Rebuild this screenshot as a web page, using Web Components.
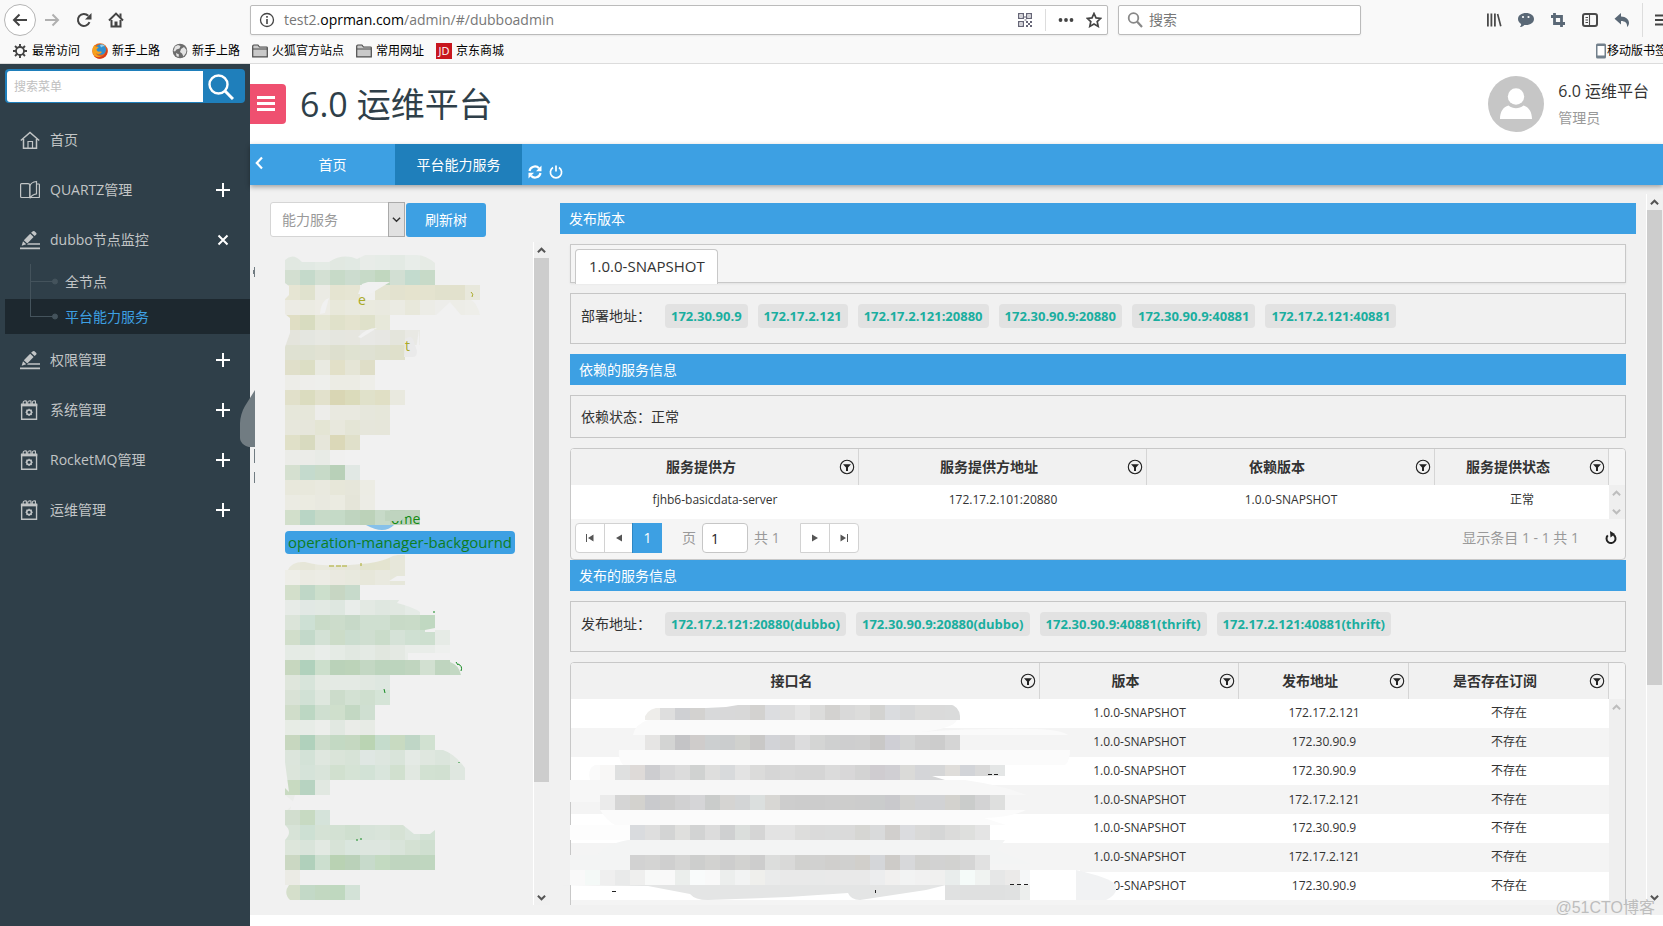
<!DOCTYPE html>
<html lang="zh-CN">
<head>
<meta charset="utf-8">
<title>6.0 运维平台</title>
<style>
html, body { margin: 0; height: 100%; overflow: hidden; }
body { font: 14px/20px "Open Sans", "Noto Sans CJK SC", sans-serif; color: #333; background: #fff; }
</style>
</head>
<body>
<ops-app></ops-app>

<script>
const ICONS = {
  back: ['0 0 16 16', '<path d="M15 8H2M7.500 2.500L2 8l5.500 5.500" fill="none" stroke="currentColor" stroke-width="2"/>'],
  forward: ['0 0 16 16', '<path d="M1 8h13M8.500 2.500L14 8l-5.500 5.500" fill="none" stroke="currentColor" stroke-width="2"/>'],
  reload: ['0 0 16 16', '<path d="M13.500 10.200A6 6 0 1 1 12.300 3.800" fill="none" stroke="currentColor" stroke-width="2"/><path d="M15.500 1v6.500H9z"/>'],
  home: ['0 0 16 16', '<path d="M1 8.500L8 1.600l7 6.900" fill="none" stroke="currentColor" stroke-width="2"/><path d="M3.500 8v6.500h9V8" fill="none" stroke="currentColor" stroke-width="2"/><path d="M6.500 9.500h3V15h-3z"/><path d="M11.500 1.500h2V6l-2-2z"/>'],
  info: ['0 0 16 16', '<circle cx="8" cy="8" r="6.500" fill="none" stroke="currentColor" stroke-width="1.300"/><path d="M7.200 7h1.600v5H7.200zM7.200 4h1.600v1.700H7.200z"/>'],
  qr: ['0 0 14 14', '<path d="M0 0h6v6H0zM1.300 1.300v3.400h3.400V1.300zM8 0h6v6H8zM9.300 1.300v3.400h3.400V1.300zM0 8h6v6H0zM1.300 9.300v3.400h3.400V9.300zM2.400 2.400h1.200v1.200H2.400zM10.400 2.400h1.200v1.200h-1.200zM2.400 10.400h1.200v1.200H2.400zM8 8h2v2H8zM12 8h2v2h-2zM10 10h2v2h-2zM8 12h2v2H8zM12 12h2v2h-2zM6.500 3h1v2h-1zM6.500 6.500h2v1h-2z" fill-rule="evenodd"/>'],
  dots: ['0 0 16 16', '<circle cx="2.500" cy="8" r="1.900"/><circle cx="8" cy="8" r="1.900"/><circle cx="13.500" cy="8" r="1.900"/>'],
  star: ['0 0 16 16', '<path d="M8 1.500l2 4.400 4.700.500-3.500 3.200 1 4.800L8 12l-4.200 2.400 1-4.800L1.300 6.400 6 5.900z" fill="none" stroke="currentColor" stroke-width="1.700"/>'],
  lens: ['0 0 16 16', '<circle cx="6.500" cy="6" r="4.800" fill="none" stroke="currentColor" stroke-width="1.800"/><path d="M10 9.500l5 5.500" stroke="currentColor" stroke-width="2.200"/>'],
  library: ['0 0 16 16', '<path d="M1 1.500h1.800v13H1zM4.500 1.500h1.800v13H4.500zM8 1.500h1.800v13H8zM10.800 2.200l1.600-.500 3.200 12.300-1.600.500z"/>'],
  chat: ['0 0 16 16', '<path d="M8 1c4.500 0 8 2.500 8 6s-3.500 6-8 6c-.600 0-1.200 0-1.700-.100C5 14.400 3.500 15 2 15c.800-1 1.200-2 1.200-3C1.200 10.900 0 9 0 7c0-3.500 3.500-6 8-6z"/><circle cx="5" cy="5" r="1.100" fill="#fff"/><circle cx="10.500" cy="5" r="1.100" fill="#fff"/>'],
  crop: ['0 0 16 16', '<path d="M4.500 1v10.500h10.500M1 4.500h10.500V15" fill="none" stroke="currentColor" stroke-width="2.800"/>'],
  panel: ['0 0 16 16', '<rect x="1" y="2" width="14" height="12" rx="2" fill="none" stroke="currentColor" stroke-width="2"/><path d="M7.500 2v12M3.500 5.500h2.500M3.500 8h2.500M3.500 10.500h2.500" stroke="currentColor" stroke-width="1.100"/>'],
  undo: ['0 0 16 16', '<path d="M7 1v3.500c5 0 8 3 8 6.500 0 1.500-.700 3-2 4 .600-4-2-6-6-6v3.500L.500 6.800z"/>'],
  menu: ['0 0 16 16', '<path d="M0 2.500h16v2H0zM0 7h16v2H0zM0 11.500h16v2H0z"/>'],
  cog: ['0 0 16 16', '<circle cx="8" cy="8" r="4" fill="none" stroke="currentColor" stroke-width="1.800"/><path d="M8 1v3M8 12v3M1 8h3M12 8h3M3 3l2.200 2.200M10.800 10.800L13 13M13 3l-2.200 2.200M5.200 10.800L3 13" stroke="currentColor" stroke-width="1.900"/>'],
  firefox: ['0 0 16 16', '<circle cx="8" cy="8" r="7.800" fill="#e66a1c"/><circle cx="8.700" cy="6.500" r="5.300" fill="#2f8fd0"/><path d="M8 2c2-1 4-.500 5 1-2 0-3 1-4 1.500z" fill="#8fd0ef"/><path d="M.500 7C.700 4 2 2.500 3 1.800c0 1 .300 1.500 1 2 1 0 2 0 2.600.700-.600 1-2 1.200-2 2 0 1.800 1.700 2.500 3.500 2 1-.200 1.900.200 1.600.800-1 2-4.200 2.200-6 .700C4.700 12.500 7 13.500 9 13.200 5 16 .200 12.500.500 7z" fill="#f6a11d"/><path d="M14.800 4c1.600 4 .500 8.500-3 10.600-4 2.200-8.200.600-9.800-1.600 4 2 8 1.500 10.200-1.200C14 9.400 14.600 7 14.800 4z" fill="#d93a1c"/>'],
  globe: ['0 0 16 16', '<circle cx="8" cy="8" r="7.300" fill="#6d6d6d"/><path d="M3 3.500l3-1.500 2.500 1-1 2.500-3 1-1.500 2L1.500 8zM9 6l3-2 2.500 3-.500 3-2.500 3.500-1.500-3L8 9zM4 10l3 1.500-.500 2.500L4.500 13z" fill="#e4e4e4"/>'],
  folder: ['0 0 16 16', '<path d="M.700 13.800V3.200c0-.700.400-1.200 1.200-1.200h4L7.500 4h7c.500 0 .800.300.800.800v9z" fill="#c9c9c9" stroke="#4c4c4c" stroke-width="1.200"/><path d="M1 6h14" stroke="#4c4c4c"/>'],
  phone: ['0 0 10 16', '<rect width="10" height="15" y="0.500" rx="1.500" fill="#72808c"/><path d="M1.500 3h7v9.500h-7z" fill="#fff"/>'],
  search: ['0 0 26 26', '<circle cx="10.500" cy="10.500" r="9" fill="none" stroke="currentColor" stroke-width="2.400"/><path d="M17 17l8 8" stroke="currentColor" stroke-width="3"/>'],
  house: ['0 0 20 18', '<path d="M.800 9.500L10 1.500l9.200 8M3.500 8v9.200h13V8" fill="none" stroke="currentColor" stroke-width="1.500"/><path d="M8 17v-6.500h4.500V17" fill="none" stroke="currentColor" stroke-width="1.200"/>'],
  book: ['0 0 20 18', '<path d="M9.500 16.500H1.500c-.500 0-.900-.300-.900-.900V3.500c0-.500.400-.900.900-.900H8c1 0 1.700.700 1.700 1.600V17M10 17.300V5c.500-2.500 2.500-4 6.500-4.500v12.300c-3 .600-5.500 2-6.500 4.500zM16.500 3h2.300c.300 0 .600.300.600.600V15.900c0 .300-.300.600-.600.600h-8" fill="none" stroke="currentColor" stroke-width="1.200"/>'],
  pen: ['0 0 20 20', '<path d="M12.500 1.500c.600-.700 1.500-.700 2.200-.100l1.400 1.300c.600.600.600 1.500 0 2.100L14.600 6l-3.500-3.300zM10.200 3.700l3.400 3.300-6.300 6.600-3.500-3.300zM3 11.300l3.300 3-4.600 1.500zM8.500 13.200H20v1.600H7zM0 17.500h20v1.700H0z"/>'],
  calendar: ['0 0 20 22', '<path d="M.800 4.500h16.400v16.700H.800z" fill="none" stroke="currentColor" stroke-width="1.500"/><path d="M0 4.500h18v2.500H0z"/><path d="M2.500 6V2.500C2.500 1 5 .800 6 1.200V5M7.500 6V2.500C7.500 1 10 .800 11 1.200V5M12.500 6V2.500c0-1.500 2.500-1.700 3.500-1.300V5" fill="none" stroke="currentColor" stroke-width="1.200"/><circle cx="9" cy="13.500" r="2.600" fill="none" stroke="currentColor" stroke-width="1.700"/><path d="M9 9.500v1.700M9 15.800v1.700M5 13.500h1.700M11.300 13.500H13M6.200 10.700l1.200 1.200M10.600 15.100l1.200 1.200M11.800 10.700l-1.200 1.200M7.400 15.100l-1.200 1.200" stroke="currentColor" stroke-width="1.300"/>'],
  plus: ['0 0 14 14', '<path d="M6 0h2v6h6v2H8v6H6V8H0V6h6z"/>'],
  cross: ['0 0 14 14', '<path d="M2.500 2.500l9 9M11.500 2.500l-9 9" stroke="currentColor" stroke-width="2"/>'],
  bars: ['0 0 18 16', '<path d="M0 0h18v3H0zM0 6h18v3H0zM0 12h18v3H0z"/>'],
  person: ['0 0 56 56', '<circle cx="28" cy="28" r="28" fill="#c6c6c6"/><circle cx="28" cy="20.500" r="8.200" fill="#fff"/><path d="M12 43c0-7 3-12 8.500-13.500 4.500 3.500 10.500 3.500 15 0C41 31 44 36 44 43z" fill="#fff"/>'],
  left: ['0 0 8 14', '<path d="M7 1.500L1.800 7 7 12.500" fill="none" stroke="currentColor" stroke-width="2.200"/>'],
  sync: ['0 0 14 14', '<path d="M1.500 6A5.500 5.500 0 0 1 11 3.300M12.500 8A5.500 5.500 0 0 1 3 10.700" fill="none" stroke="currentColor" stroke-width="2.200"/><path d="M13.500.500v5.700H8zM.500 13.500V7.800H6z"/>'],
  power: ['0 0 14 14', '<path d="M4 2.500a5.600 5.600 0 1 0 6 0M7 .500v6" fill="none" stroke="currentColor" stroke-width="1.700"/>'],
  down: ['0 0 10 10', '<path d="M1 3l4 4 4-4" fill="none" stroke="currentColor" stroke-width="1.600"/>'],
  up: ['0 0 10 10', '<path d="M1 7l4-4 4 4" fill="none" stroke="currentColor" stroke-width="2.200"/>'],
  dn: ['0 0 10 10', '<path d="M1 3l4 4 4-4" fill="none" stroke="currentColor" stroke-width="2.200"/>'],
  filter: ['0 0 16 16', '<circle cx="8" cy="8" r="6.700" fill="none" stroke="currentColor" stroke-width="1.100"/><path d="M4 5.300h8L9 8.500V12H7V8.500z"/>'],
  first: ['0 0 8 10', '<path d="M0 1h1v8H0zM7.500 1.500v7L2 5z"/>'],
  prev: ['0 0 8 10', '<path d="M7 1.500v7L1 5z"/>'],
  next: ['0 0 8 10', '<path d="M1 1.500v7L7 5z"/>'],
  last: ['0 0 8 10', '<path d="M7 1h1v8H7zM.500 1.500v7L6 5z"/>'],
  refresh: ['0 0 12 14', '<path d="M8.500 3.800A4.500 4.500 0 1 1 2.800 4.400" fill="none" stroke="currentColor" stroke-width="2"/><path d="M5 0l5 3-4.500 3.500z"/>']
};

/* Shared base: renders the markup from view() into an open shadow root. */
class View extends HTMLElement {
  connectedCallback() {
    if (this.shadowRoot) return;
    const t = document.createElement('template');
    t.innerHTML = '<style>*{box-sizing:border-box}button,input,select{font:inherit;margin:0}:host{display:block}' + this.css() + '</style>' + this.view();
    this.attachShadow({ mode: 'open' }).append(t.content.cloneNode(true));
  }
  css() { return ''; }
  view() { return '<slot></slot>'; }
  attr(n, d = '') { return this.getAttribute(n) ?? d; }
}
const define = (name, cls) => customElements.define(name, cls);

define('ui-icon', class extends View {
  css() { return ':host{display:block;flex:none;width:16px;height:16px}svg{display:block;width:100%;height:100%;fill:currentColor}'; }
  view() { const [box, body] = ICONS[this.attr('name')]; return `<svg viewBox="${box}" aria-hidden="true">${body}</svg>`; }
});

define('scroll-bar', class extends View {
  css() { return `
    :host{display:flex;flex-direction:column;flex:none;width:17px;border-left:1px solid #fff;background:#f0f0f0;color:#555}
    :host([idle]){color:#bdbdbd;border-left:0;background:#efefef}
    .end{height:16px;width:15px;display:grid;place-items:center}
    ui-icon{width:9px;height:9px}
    .thumb{background:#cdcdcd;width:15px}`; }
  view() {
    const t = +this.attr('thumb', 0);
    return `<div class="end"><ui-icon name="up"></ui-icon></div><div class="thumb" style="flex:${t}"></div><div style="flex:${100 - t}"></div><div class="end"><ui-icon name="dn"></ui-icon></div>`;
  }
});

/* Browser frame */
define('browser-toolbar', class extends View {
  css() { return `
    :host{display:flex;align-items:center;height:40px;background:#f9f9f9;color:#444;padding-left:4px;overflow:hidden;font-size:14px}
    button{border:0;background:none;padding:0;color:inherit;width:32px;height:32px;display:grid;place-items:center;flex:none}
    .back{border:1px solid #b5b5b5;border-radius:50%;background:#fff}
    .off{color:#b0b0b0}
    .box{display:flex;align-items:center;height:30px;border:1px solid #bbb;border-radius:2px;background:#fff;box-shadow:0 1px 2px #0001;position:relative}
    .url{flex:1;margin-left:118px;padding-left:8px}
    .addr{flex:1;margin-left:9px;color:#777;white-space:nowrap;outline:0}
    b{font-weight:400;color:#000}
    .find{width:243px;margin:0 117px 0 10px;padding-left:8px;color:#888}
    .find input{flex:1;min-width:0;border:0;background:none;padding:0 0 0 6px;color:#777;outline:0}
    .find input::placeholder{color:#777}
    .sep{width:1px;height:22px;background:#ddd;margin:0 12px}
    .url ui-icon+ui-icon{margin-left:12px}
    .qr{width:14px;height:14px;color:#667;margin-right:1px}
    .url .star{margin-right:5px}
    .tools{display:flex;color:#4a4a4a}
    .blue{color:#5a6876}
    .line{width:1px;height:34px;background:#ddd;margin-left:4px}
    .more{width:8px;margin-left:12px;overflow:hidden;justify-content:start}`; }
  view() { return `
    <button class="back" aria-label="后退"><ui-icon name="back"></ui-icon></button>
    <button class="off" aria-label="前进"><ui-icon name="forward"></ui-icon></button>
    <button aria-label="刷新"><ui-icon name="reload"></ui-icon></button>
    <button aria-label="主页"><ui-icon name="home"></ui-icon></button>
    <div class="box url"><ui-icon name="info"></ui-icon>
      <div class="addr" role="textbox" contenteditable="true" spellcheck="false" aria-label="地址">test2.<b>oprman.com</b>/admin/#/dubboadmin</div>
      <ui-icon class="qr" name="qr"></ui-icon><span class="sep"></span><ui-icon name="dots"></ui-icon><ui-icon class="star" name="star"></ui-icon></div>
    <div class="box find"><ui-icon name="lens"></ui-icon><input type="search" aria-label="搜索" placeholder="搜索"></div>
    <div class="tools"><button aria-label="书库"><ui-icon name="library"></ui-icon></button><button class="blue" aria-label="消息"><ui-icon name="chat"></ui-icon></button><button class="blue" aria-label="截图"><ui-icon name="crop"></ui-icon></button><button aria-label="侧栏"><ui-icon name="panel"></ui-icon></button><button class="blue" aria-label="撤销"><ui-icon name="undo"></ui-icon></button></div>
    <span class="line"></span><button class="more" aria-label="菜单"><ui-icon name="menu"></ui-icon></button>`; }
});

define('bookmark-bar', class extends View {
  css() { return `
    :host{display:flex;align-items:center;height:24px;padding:0 0 2px 12px;background:#f9f9f9;border-bottom:1px solid #dcdcdc;font-size:12px;line-height:16px;color:#000;overflow:hidden}
    a{display:flex;align-items:center;gap:4px;margin-right:12px;color:inherit;text-decoration:none;white-space:nowrap;flex:none}
    .jd{width:16px;height:16px;background:#c8161e;color:#fff;font-size:11px;text-align:center}
    .mobile{margin:0 0 0 auto;width:67px;gap:1px;overflow:hidden}
    .mobile ui-icon{width:10px}.cog{color:#444}`; }
  view() { return `
    <a href="#"><ui-icon class="cog" name="cog"></ui-icon>最常访问</a>
    <a href="#"><ui-icon name="firefox"></ui-icon>新手上路</a>
    <a href="#"><ui-icon name="globe"></ui-icon>新手上路</a>
    <a href="#"><ui-icon name="folder"></ui-icon>火狐官方站点</a>
    <a href="#"><ui-icon name="folder"></ui-icon>常用网址</a>
    <a href="#"><span class="jd">JD</span>京东商城</a>
    <a href="#" class="mobile"><ui-icon name="phone"></ui-icon>移动版书签</a>`; }
});

/* Side menu */
define('menu-item', class extends View {
  css() { return `
    a{display:flex;align-items:center;height:50px;padding:0 20px;color:#c2c5c6;text-decoration:none}
    .i{width:20px;height:20px;margin-right:10px}
    span{flex:1}
    .s{width:14px;height:14px;color:#fff}`; }
  view() { return `<a href="#"><ui-icon class="i" name="${this.attr('icon')}"></ui-icon><span><slot></slot></span>${this.attr('sign') ? `<ui-icon class="s" name="${this.attr('sign')}"></ui-icon>` : ''}</a>`; }
});
define('menu-sub', class extends View {
  css() { return `
    a{display:flex;align-items:center;height:35px;margin-left:5px;padding-left:25px;color:#c2c5c6;text-decoration:none}
    :host([active]) a{background:#1d282f;color:#3da0e3}
    svg{width:30px;height:35px;margin-right:5px;stroke:#44535c;fill:#44535c}`; }
  view() { return `<a href="#"><svg viewBox="0 0 30 35" aria-hidden="true"><path d="M.5 0v${this.hasAttribute('active') ? 18 : 35}M0 17.500h25" fill="none"/><circle cx="25" cy="17.500" r="2.500"/></svg><slot></slot></a>`; }
});
define('side-menu', class extends View {
  css() { return `
    :host{flex:none;width:250px;background:#2f3f49;padding-top:5px;position:relative}
    form{display:flex;margin:0 5px 12px;height:34px;background:#1f7fbb;border-radius:4px;padding:2px 0 1px 2px}
    input{flex:1;min-width:0;border:0;border-radius:3px 0 0 3px;padding:0 7px;font-size:12px;background:#fff;outline:0}
    input::placeholder{color:#c0c0c0}
    button{width:42px;border:0;background:none;color:#fff;padding:0 0 0 5px}
    button ui-icon{width:26px;height:26px}
    .sub{margin:-1px 0 1px}
    svg{position:absolute;left:240px;top:196px;width:16px;height:230px;z-index:2}`; }
  view() { return `
    <form><input type="search" aria-label="搜索菜单" placeholder="搜索菜单"><button type="button" aria-label="搜索"><ui-icon name="search"></ui-icon></button></form>
    <nav>
      <menu-item icon="house">首页</menu-item>
      <menu-item icon="book" sign="plus">QUARTZ管理</menu-item>
      <menu-item icon="pen" sign="cross">dubbo节点监控</menu-item>
      <div class="sub"><menu-sub>全节点</menu-sub>
      <menu-sub active>平台能力服务</menu-sub></div>
      <menu-item icon="pen" sign="plus">权限管理</menu-item>
      <menu-item icon="calendar" sign="plus">系统管理</menu-item>
      <menu-item icon="calendar" sign="plus">RocketMQ管理</menu-item>
      <menu-item icon="calendar" sign="plus">运维管理</menu-item>
    </nav>
    <svg viewBox="0 0 16 230" aria-hidden="true" fill="#717c82"><path d="M15 130v57H9c-5-1-9-5-9-9v-15c0-5 2-12 5-17zM14 7h1v10h-1zM13 10h1v4h-1zM14 189h1v14h-1zM14 212h1v11h-1z"/></svg>`; }
});

/* Page header */
define('page-header', class extends View {
  css() { return `
    :host{display:flex;align-items:center;height:80px;background:#fff;padding-right:14px}
    button{width:36px;height:40px;border:0;border-radius:0 4px 4px 0;background:#ef5070;color:#fff;padding:0 0 0 7px}
    button ui-icon{width:18px;height:16px}
    h1{flex:1;margin:0 0 0 14px;font-size:34px;line-height:44px;font-weight:400;color:#2f3f49}
    .face{width:56px;height:56px;margin-right:14px}
    strong,small{display:block;font-weight:400}
    strong{font-size:16px;line-height:24px;margin-bottom:4px}
    small{font-size:14px;line-height:22px;color:#999}`; }
  view() { return `
    <button aria-label="收起菜单"><ui-icon name="bars"></ui-icon></button><h1>6.0 运维平台</h1>
    <ui-icon class="face" name="person"></ui-icon><div><strong>6.0 运维平台</strong><small>管理员</small></div>`; }
});
define('page-tabs', class extends View {
  css() { return `
    :host{display:flex;height:41px;background:#3da0e3;color:#fff;box-shadow:0 2px 5px #0005;position:relative;z-index:1}
    button{border:0;background:none;color:#fff;padding:0;height:41px}
    .l{width:20px;padding-left:5px;height:38px}.l ui-icon{width:8px;height:14px}
    .t{width:125px}.on{width:127px;background:#1f7fbb}
    .s{width:14px;margin-left:6px;padding-top:15px}
    .s+.s{margin-left:7px}
    .s ui-icon{width:14px;height:14px}`; }
  view() { return `<button class="l" aria-label="向左"><ui-icon name="left"></ui-icon></button><button class="t">首页</button><button class="on">平台能力服务</button><button class="s" aria-label="刷新"><ui-icon name="sync"></ui-icon></button><button class="s" aria-label="关闭"><ui-icon name="power"></ui-icon></button>`; }
});

/* Censored areas: every row is "x y colours", one 15px cell per colour. */
const cells = rows => rows.map(r => {
  const [x, y, list] = r;
  return list.split(' ').map((c, i) => `<path fill="#${c}" d="M${x + i * 15} ${y}h15v15h-15z"/>`).join('');
}).join('');

const TREE_TOP = cells([
  [0, 0, 'e1e8e1 e1e9e3 e4ebe5 e1e8e1 e1e9e3 e8ece8 e6ece7 e3eae4 e8ede9 e6ebe5'],
  [0, 15, 'd3dfd1 c5dacb d3e0d3 c7dac8 ccdccf c7dac8 c1d7bf d2dfd3 c3dbce c7dac8 eff0ef'],
  [0, 30, 'e6e5d3 e0e2ce ebebe4 e5e4d1 e6e5d3 f0f0ee e4e4d2 e3e2cf e5e3ce e4e3cf e1e1cd e2e1cd e8e8dc'],
  [0, 45, 'ecebe4 ebebe2 edece5 e8e8da e9e9de eaeadf e9e9df ebebe3 e8e8db ecece6 ededea edede7 eeeee9'],
  [0, 60, 'e0dec4 d8dcc0 e5e6d4 e0e1ca e4e3ce dfe1ca e7e8da'],
  [0, 75, 'e4e4dc e4e6e0 e7e8e2 e5e6df e6e6df e8e8e5 e7e7e3 e4e5dc e9e9e4'],
  [0, 90, 'dfe1d2 dee1d2 e1e2d3 dddfce dfe2d1 dfe1d3 dee0cf dfe0cb'],
  [0, 105, 'e0dfca dcdec5 e9eae1 e2e0c8 e5e5d6 dfdec8'],
  [0, 120, 'edede8 eeeeeb eeefec ecece4 ecece4 eeeee9'],
  [0, 135, 'e1e0ca dbdcbf e2e1cc d9d6b4 dbdbbb e0e1ca e0dfc5 e9e9df'],
  [0, 150, 'e6e7da e6e7da ededea e9e9e0 e9e9e0 e6e7dc e6e7da'],
  [0, 165, 'e7e7dc e6e6db e4e5d4 e8e8dd e4e5d6 e6e6db e6e6da'],
  [0, 180, 'e0e0c8 d8dabf e6e6da dbd8b8 e0e0ca'],
  [0, 195, 'ebece8 ebece8 e8ebe6 f0f0ef'],
  [0, 210, 'd5e0d0 c4dacd c7dac8 b8d0b8 e1e8e4'],
  [0, 225, 'e8e8dc e8e8dc e9e9df e7e7d9 e6e6da ecece4'],
  [0, 240, 'ebebe3 ebebe1 e9e9e0 ebebe1 e5e5d9 ecece5'],
  [0, 255, 'd2dfcb b9d5c5 c7dac8 c5dac7 bfd4bf bcd2b9 c7dac8 bcd2bc bfd4bf']
]) + `<g fill="#f1f1f1"><path d="M0 0h150v8Q140 0 132 0H80l-8 4Q58-2 44 7H17Q8-3 0 5zM77 29l6-2h22L85 39H73zM0 28l4 3v9l-4 4zM0 59l5 4v15L0 92zM151 60l14-13 11 13zM35 59q1-14 9-16l-4 15zM73 82q8-9 19-9l-16 10zM195 45v15q-3-12-9-15zM134 75l1 27-4-8z"/></g><path fill="#eaeaea" d="M120 84q6-4 8 0l4 12q0 6-4 6h-9z"/>
<path fill="#86c1ea" d="M3 270h106q-10 10-28 0H3z"/>
<g font-size="14"><text x="73" y="50" fill="#a9a928">e</text><text x="120" y="96" fill="#a9a928">t</text><path d="M186 37q3 2 1 5" fill="none" stroke="#a9a928"/><text x="106" y="269" fill="#128a12">ome</text><path fill="#bfd4bf" d="M100 256h35q-14 3-19 10h-16z"/></g>`;

const TREE_BOTTOM = cells([
  [0, 0, 'e8e8db e6e6d8 e9e9dd e7e7d9 e6e6da e3e4cf e4e4d0 e7e7da'],
  [0, 15, 'eeeee8 ebebe3 ecece5 eae9e0 e8e9de e7e7da e9e9df e6e7da'],
  [0, 30, 'd3dfcb bfd7c7 ccdfcc c7d6c3 c7dacb'],
  [0, 45, 'e7ebe7 e1e8e4 e2e9e3 dee7e0 e9edea e3e9e3 dfe7e0 e1e8e1 e5ebe6'],
  [0, 60, 'dbe4d9 cde0d4 c9dbc8 ccdccb c7d9c8 cfdfd0 cfdfd0 c8dac7 c9dbc8 c0d8c1'],
  [0, 75, 'd1decb c3d9ca d3e1d5 ccdcc8 cbddcf cfded0 cadcca d5e2d7 cfe0d2 cddfcf e6ebe6'],
  [0, 90, 'e5ebe5 e5ebe5 e9edea e5ebe5 e1e8e1 e4eae4 e1e7df e4e9e3 e9ede9 e9ede9 eef0ee'],
  [0, 105, 'c7d7bf b0d1bc ccdfcc bad2b9 bcd3b9 c3d7c3 bcd4bd bcd4bd c0d5bf d2e0d1 bfd5bf c3d8c3'],
  [0, 120, 'dfe6dc d7e4da e4eae3 e4eae4 e4eae4 e1e8e1 dee7e0'],
  [0, 135, 'd9e2d6 d1e1d5 dee7de ccdccb d3e1d3 cfdfcf d5e4d7'],
  [0, 150, 'd0ddca bcd7c3 cfdfd0 cfdfcc c3d8c3 cfdfd1'],
  [0, 165, 'e7ece5 e7ece7 eceeeb e1e8e1 eaece8 e7ebe5'],
  [0, 180, 'c7d7bf b0d1bc ccdccb c3d9c3 c5d8c1 bad4b3 c5dccc c8dac1 bfd6c6 d1e1d1'],
  [0, 195, 'dce5dc d3e2d7 dfe7df dae4d9 d7e3d7 dfe7e3 dde6df d9e4da e4eae5 dfe7df dbe5dc e1e8e1'],
  [0, 210, 'dce5db d5e3d9 d9e4da d1e0cf d5e3d5 d2e2d6 d9e5dc d1e0cf e1e8e1 d2e1d2 d1e0d1 dfe7e0'],
  [0, 225, 'c8dac1 b7d3c1 e1e8e1'],
  [0, 240, 'ebedea'],
  [0, 255, 'd2decf c7dac2 d5e3da'],
  [0, 270, 'd7e3d7 cde0d3 d5e2d5 d3e1d3 cfdfcf d7e3d9 d9e4da d6e2d5 dae5dc d3e2d5'],
  [0, 285, 'dde6db d9e4da e2e9e2 d7e3d7 dae6de dde6df dde6df d9e4da d4e1d3 cfdfd0'],
  [0, 300, 'cbd8c3 b0d0bb ccdfcf b9d2b3 bad1b9 c7dacb c3dac1 bfd5bf bfd5bf bfd6bf'],
  [0, 315, 'ebebe5'],
  [0, 330, 'd5dfcb c3d9c7 c2d8c1 bfd8bf d3e2d7']
]) + `<g fill="#f1f1f1"><path d="M0 0h120q-10-1-16 3-12 5-28 6Q40 13 20 7 7 6 3 15H0zM104 26l8-5h8v5zM112 48q16 4 23 9v-13h-20zM140 77h10v-4l-10 2zM123 98h42v7h-42zM165 99h15v21h-4q-2-10-11-13zM158 195q12 4 22 18v-18zM0 207l4 30-4-4zM0 240l10 8-8 7H0zM0 270q8 7 0 15zM118 270h32v5l-5 4h-16zM10 240h5v15H5zM0 330h4q-6 8 1 15H0z"/></g>
<g fill="none" stroke="#138a20"><path d="M171 107l2 3M173 109q5 2 3 7M99 134l1 4M148 57h2M174 207v1M71 285h2M75 284h2"/></g>
<path d="M44 11h5M51 11h5M57 11h5M76 8v3" stroke="#a9a928"/>`;

define('tree-panel', class extends View {
  css() { return `
    :host{flex:none;width:300px;display:flex;flex-direction:column;padding:17px 0 10px 20px}
    .bar{display:flex;align-items:center;gap:1px;height:35px}
    .pick{display:grid;width:135px;height:35px}
    select,.arrow{grid-area:1/1}
    select{appearance:none;border:1px solid #d5d5d5;border-radius:3px;background:#fff;color:#999;padding:0 11px;outline:0}
    .arrow{justify-self:end;width:17px;border:1px solid #aaa;background:#e1e1e1;display:grid;place-items:center;pointer-events:none}
    .arrow ui-icon{width:9px;height:9px}
    .bar button{width:80px;height:34px;border:0;border-radius:3px;background:#3da0e3;color:#fff;padding:0}
    .body{flex:1;min-height:0;display:flex;margin-top:5px}
    .tree{flex:1;padding:13px 0 0 15px;overflow:hidden}
    svg{display:block;width:200px}
    .a{height:276px}.b{height:346px;margin-top:1px}
    .node{display:inline-block;vertical-align:top;height:23px;line-height:23px;border-radius:4px;background:#3da0e3;color:#0f7d1f;padding:0 3px;font-size:15px;text-decoration:none}`; }
  view() { return `
    <div class="bar"><div class="pick"><select aria-label="服务类型"><option>能力服务</option></select><span class="arrow"><ui-icon name="down"></ui-icon></span></div><button>刷新树</button></div>
    <div class="body"><div class="tree">
      <svg class="a" viewBox="0 0 200 276" aria-hidden="true">${TREE_TOP}</svg>
      <a class="node" href="#">operation-manager-backgournd</a>
      <svg class="b" viewBox="0 0 200 346" aria-hidden="true">${TREE_BOTTOM}</svg>
    </div><scroll-bar thumb="83"></scroll-bar></div>`; }
});

/* Detail panel parts */
define('section-title', class extends View {
  css() { return 'h2{margin:0;height:31px;line-height:31px;padding:0 9px;font-size:14px;font-weight:400;background:#3da0e3;color:#fff}'; }
  view() { return '<h2><slot></slot></h2>'; }
});
define('info-box', class extends View {
  css() { return `
    :host{border:1px solid #c6c6c6;height:43px;line-height:41px;padding:0 10px}
    :host([tall]){height:51px;line-height:20px;padding-top:12px}`; }
});
define('address-list', class extends View {
  css() { return `
    div{display:flex;align-items:center;height:20px}
    span{width:84px;flex:none}
    ul{display:flex;gap:10px;margin:0;padding:0;list-style:none}
    li{height:24px;line-height:24px;padding:0 6px;border-radius:4px;background:#e2e2e2;color:#1aae9f;font-size:13px;font-weight:700;white-space:nowrap}`; }
  view() { return `<div><span>${this.attr('label')}</span><ul>${this.attr('items').split(' ').map(i => `<li>${i}</li>`).join('')}</ul></div>`; }
});
define('version-tabs', class extends View {
  css() { return `
    :host{display:flex;height:39px;border:1px solid #c8c8c8;background:#f5f5f5;padding:4px 4px 0;box-shadow:0 1px 2px #0001}
    button{height:35px;border:1px solid #c8c8c8;border-bottom:0;border-radius:4px 4px 0 0;background:#fff;color:#333;padding:0 12px 2px 13px;font-size:15px}`; }
  view() { return '<button><slot></slot></button>'; }
});
define('data-grid', class extends View {
  css() { return `
    :host{border:1px solid #c8c8c8;border-radius:4px;background:#f5f5f5;overflow:hidden}
    .w{display:flex}
    .m{flex:1;min-width:0;background:#f5f5f5}
    table{width:100%;table-layout:fixed;border-collapse:separate;border-spacing:0}
    th{height:36px;padding:0;background:#f1f1f1;border-right:1px solid #d5d5d5}
    th div{display:flex;align-items:center;padding-right:3px}
    th span{flex:1}
    th button{border:0;background:none;padding:0;width:16px;height:16px;color:#222;margin-left:8px}
    td{padding:0;height:28px;text-align:center;font-size:12px;line-height:20px;background:#fff}
    tr:nth-child(even) td{background:#f4f4f4}
    .side{width:16px;flex:none;display:flex;flex-direction:column}
    .side i{height:36px;background:#f5f5f5}
    scroll-bar{flex:1;width:16px}
    .one .m{background:#fff}.one .w{height:70px}.one td{height:30px}
    .many table{height:266px}`; }
  view() {
    const heads = this.attr('heads').split('|').map(h => h.split(':'));
    const rows = this.attr('rows').split(';').map(r => r.split('|'));
    return `<div class="${rows.length > 1 ? 'many' : 'one'}"><div class="w"><div class="m"><table>
      <colgroup>${heads.map(h => `<col${h[1] ? ` style="width:${h[1]}px"` : ''}>`).join('')}</colgroup>
      <thead><tr>${heads.map(h => `<th><div><span>${h[0]}</span><button aria-label="筛选"><ui-icon name="filter"></ui-icon></button></div></th>`).join('')}</tr></thead>
      <tbody>${rows.map(r => `<tr>${r.map(c => `<td>${c}</td>`).join('')}</tr>`).join('')}</tbody></table></div>
      <div class="side"><i></i><scroll-bar idle></scroll-bar></div></div></div><slot></slot>`;
  }
});
define('grid-pager', class extends View {
  css() { return `
    :host{display:flex;align-items:center;height:40px;padding:0 8px 2px 4px;color:#999}
    .g{display:flex;border:1px solid #d2d2d2;border-radius:4px 0 0 4px;height:30px;background:#fff}
    .g.r{border-radius:0 4px 4px 0}
    .g button{width:28px;border:0;background:none;color:#555;padding:0;display:grid;place-items:center}
    .g button+button{border-left:1px solid #d2d2d2;width:29px}
    .g button.on{background:#3da0e3;color:#fff;border-left:1px solid #2d87c4;width:30px;margin:-1px}
    .g ui-icon{width:8px;height:10px}
    label{display:flex;align-items:center;gap:6px;margin:0 20px}
    input{width:46px;height:30px;border:1px solid #c6c6c6;border-radius:4px;padding:0 8px;color:#222;background:#fff;outline:0}
    p{margin:0 26px 0 auto}
    .re{border:0;background:none;padding:0;color:#222}.re ui-icon{width:12px;height:14px}`; }
  view() { return `
    <div class="g"><button aria-label="首页"><ui-icon name="first"></ui-icon></button><button aria-label="上一页"><ui-icon name="prev"></ui-icon></button><button class="on">1</button></div>
    <label>页<input value="1">共 1</label>
    <div class="g r"><button aria-label="下一页"><ui-icon name="next"></ui-icon></button><button aria-label="末页"><ui-icon name="last"></ui-icon></button></div>
    <p>显示条目 1 - 1 共 1</p><button class="re" aria-label="刷新"><ui-icon name="refresh"></ui-icon></button>`; }
});

const GRID_MASK = `<path fill="#fafafa" d="M93 35q2-11 15-15h309q-4 9-38 12 60-4 117-3 25 1 32 6z"/><path fill="#fbfbfb" d="M79 50h451q0 11-5 15H83q-5-6-4-15z"/>
<path fill="#fafafa" d="M50 80q-3-12 5-15h20v15z"/><path fill="#f7f7f7" d="M30 80h395q40 6 61 15H62v7H30z"/><path fill="#fbfbfb" d="M60 110h426q-14 7-42 8l22 7H75q-8-4-15-15z"/>
<path fill="#fdfdfd" d="M30 125h60v15H30z"/><path fill="#f3f4f4" d="M58 155q5-10 30-15h377l-8 10 34 14H150v6H30v-15z"/>
<path fill="#e4e5e5" d="M20 185h386l-20 5-66 10q-9 0-12-7l-60 4-80 3q-13 0-18-6l-42-8z"/>` + cells([
  [105, 5, 'eeedea dedede cfd0d3 d3d2d0 d8d9da d8d8d9 d8d8d8 d3d2d0 dcdde0 dedede e5e5e5 dcdcdb d3d2d0 d9d9d9 dcdcdb d3d3d1 dadcdf d7d8d9 dcdcdb dadada dadbdb'],
  [105, 35, 'e6e5e4 d3d4d3 c4c4c6 cfcccb cccfd0 cbcdce d0d1ce c9c8c7 d2d3d7 d1d1d2 dcdcdd d4d5d4 cfd0d0 cececf cfcfcf c9c8c7 cfcfd5 d4d5d5 cfcfcf cccccc d5d5d5'],
  [60, 65, 'f8f7f6 dfe0e0 dedad8 cdcdd0 d7d7d8 dcdcdc d0d2d1 dededd d8dadc e3e3e3 dbdbda d6d6d6 d8d8d8 d6d6d6 d5d5d5 dbdbdb d8d7d8 d3d3d3 cfccd0 d0cfd3 dadad8 d4d5d8 d5d6d7 dfddda d2d4d8 d9d9d9 e4e6e6'],
  [60, 95, 'ebebeb d5d5d5 d3d2ce c9cacd cccccc d1d1d2 d5d5d7 cacccb d5d4d2 d3d5d6 dbdfde d8d7d4 cdcdcd cccccc cccccc cdcdcd cdcdcc cccccc cacccc c9c9cc d2d2d0 d1d2d4 d1d2d4 d3d2ce cacccb d3d3d4 dedfde'],
  [90, 125, 'd9dbde dedede d3d4d4 dfdfdd d2d3d3 dcdcdc cfd0d1 dbdedc d5d5d5 e3e3e3 e3e3e3 dddddc dadada dadbdb dadada d6d6d3 d9dadb d1cfcd dbdcdf d9d9d8 d5d6d6 dbdbda dedfdd e4e4e4'],
  [90, 155, 'd2d2d2 d4d4d3 cfcfcf d5d5d4 cdcecd d2d2d0 cdcdcd d2d2d0 cdcdcd dcdddc d9d9d8 d1d1cf d1d1d0 d0cfcd d0d0cf d1cfcb d4d6d9 cdcbc8 d7d8da d1d1cf d2d2d2 d2d2d0 d5d5d5 e1e1e1'],
  [30, 170, 'f9f9f9 f4f9f7 efefef e9eaea efefee f8f9f8 f9f9f9 ebeeec f9fbfb f9f9f9 eceeed f2f3f3 efefec eaebeb e9e9e9 e9e9e9 e8e9e9 e9e9e9 e9e9e9 e9e9e9 ecedee f1f0ef f2f3f3 f1f1f1 f0f0ef e9edec f5fbf9 f0f3f1 e6e7e7 ebeae9 f5f7f8'],
  [405, 185, 'e0e1e1 dfe0e0 dfe0e0 dfe0e0 e0e1e1 eceeed']
]) + `<path fill="#fff" d="M104 4h100l-18 3-20 1h-50q-10 2-12 12zM490 170h50v30h-50zM409 5h16l-2-1h-14q10 2 11 12v-11z"/><path fill="#f1f2f3" d="M536 170q35 8 40 15v6q-3 6-10 9h-30z"/><path fill="#fff" d="M392 76h33v4h-20zM425 76h40v4h-40z"/><path fill="#222" d="M448 74h4v1h-4zM454 74h4v1h-4zM470 184h4v1h-4zM477 184h4v1h-4zM484 184h4v1h-4zM335 190h1v3h-1zM72 191h4v1h-4z"/>`;

define('detail-panel', class extends View {
  css() { return `
    :host{flex:1;min-width:0;display:flex;padding:0 0 10px 10px}
    .scroll{flex:1;min-width:0;padding:18px 10px 0 0;overflow:hidden}
    .in{padding:10px 10px 0;display:grid;gap:10px}
    .flush{display:grid}
    .last{position:relative}
    svg{position:absolute;left:-30px;top:38px;width:585px;height:205px}
    scroll-bar{margin-top:9px}`; }
  view() { return `
    <div class="scroll"><section-title>发布版本</section-title><div class="in">
      <version-tabs>1.0.0-SNAPSHOT</version-tabs>
      <info-box tall><address-list label="部署地址：" items="172.30.90.9 172.17.2.121 172.17.2.121:20880 172.30.90.9:20880 172.30.90.9:40881 172.17.2.121:40881"></address-list></info-box>
      <section-title>依赖的服务信息</section-title>
      <info-box>依赖状态：正常</info-box>
      <div class="flush"><data-grid heads="服务提供方|服务提供方地址|依赖版本|服务提供状态:174" rows="fjhb6-basicdata-server|172.17.2.101:20880|1.0.0-SNAPSHOT|正常"><grid-pager></grid-pager></data-grid>
      <section-title>发布的服务信息</section-title></div>
      <info-box tall><address-list label="发布地址：" items="172.17.2.121:20880(dubbo) 172.30.90.9:20880(dubbo) 172.30.90.9:40881(thrift) 172.17.2.121:40881(thrift)"></address-list></info-box>
      <div class="last"><data-grid heads="接口名|版本:199|发布地址:170|是否存在订阅:200" rows="${['121', '', '', '121', '', '121', ''].map(v => `|1.0.0-SNAPSHOT|${v ? '172.17.2.121' : '172.30.90.9'}|不存在`).join(';')};|||"></data-grid>
        <svg viewBox="0 0 585 205" aria-hidden="true">${GRID_MASK}</svg></div>
    </div></div><scroll-bar thumb="70"></scroll-bar>`; }
});

define('ops-app', class extends View {
  css() { return `
    :host{display:flex;flex-direction:column;height:100vh}
    .page{flex:1;min-height:0;display:flex}
    main{flex:1;min-width:0;display:flex;flex-direction:column}
    .work{flex:1;min-height:0;display:flex;background:#f1f1f1;margin-bottom:11px}
    .mark{position:absolute;right:8px;bottom:8px;font:16px/20px "Liberation Sans","Noto Sans CJK SC",sans-serif;color:#bdbdbd}`; }
  view() { return `
    <browser-toolbar></browser-toolbar><bookmark-bar></bookmark-bar>
    <div class="page"><side-menu></side-menu><main><page-header></page-header><page-tabs></page-tabs>
    <div class="work"><tree-panel></tree-panel><detail-panel></detail-panel></div></main></div>
    <span class="mark">@51CTO博客</span>`; }
});
</script>
</body>
</html>
